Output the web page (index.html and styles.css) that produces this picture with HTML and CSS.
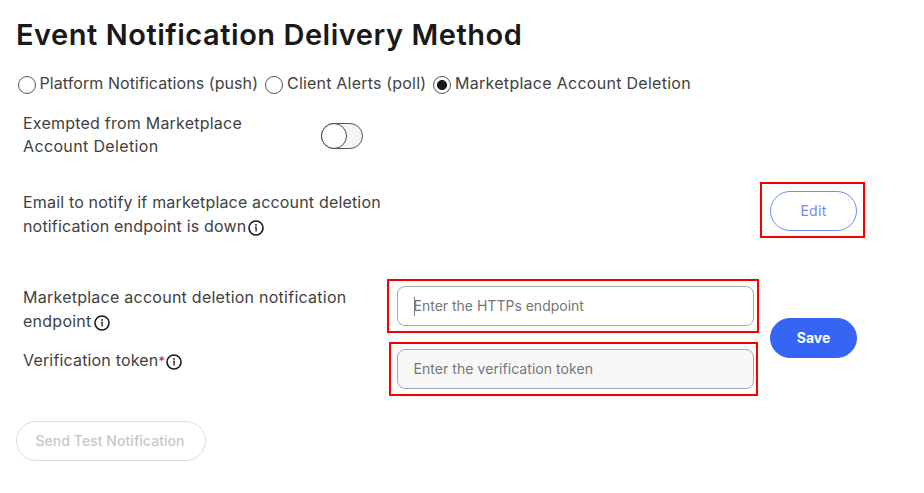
FILE: index.html
```html
<!DOCTYPE html>
<html lang="en">
<head>
<meta charset="utf-8">
<title>Event Notification Delivery Method</title>
<link rel="stylesheet" href="styles.css">
</head>
<body>
<svg class="sprite" width="0" height="0" aria-hidden="true">
  <symbol id="info" viewBox="0 0 16 16">
    <circle cx="8" cy="8" r="7" fill="none" stroke="#191919" stroke-width="1.6"/>
    <circle cx="8" cy="4.9" r="0.95" fill="#191919"/>
    <path d="M7 7.4h1.1v4" fill="none" stroke="#191919" stroke-width="1.3"/>
  </symbol>
</svg>
<main class="page">
  <h1 class="title">Event Notification Delivery Method</h1>
  <div class="methods" role="radiogroup">
    <label class="method method-push"><span class="radio"></span><span class="text">Platform Notifications (push)</span></label>
    <label class="method method-poll"><span class="radio"></span><span class="text">Client Alerts (poll)</span></label>
    <label class="method method-deletion"><span class="radio checked"></span><span class="text">Marketplace Account Deletion</span></label>
  </div>
  <section class="row row-exempt">
    <div class="label label-exempt">Exempted from Marketplace<br><span class="wide">Account Deletion</span></div>
    <span class="toggle"><span class="knob"></span></span>
  </section>
  <section class="row row-email">
    <div class="label">Email to notify if marketplace account deletion<br>notification endpoint is down<svg class="info"><use href="#info"/></svg></div>
    <div class="mark mark-edit"><button class="btn btn-edit">Edit</button></div>
  </section>
  <section class="row row-form">
    <div class="labels">
      <div class="label label-endpoint">Marketplace account deletion notification<br>endpoint<svg class="info"><use href="#info"/></svg></div>
      <div class="label label-token">Verification token<span class="required">*</span><svg class="info"><use href="#info"/></svg></div>
    </div>
    <div class="fields">
      <div class="mark mark-endpoint"><div class="field"><span class="caret"></span><span class="hint hint-endpoint">Enter the HTTPs endpoint</span></div></div>
      <div class="mark mark-token"><div class="field field-filled"><span class="hint hint-token">Enter the verification token</span></div></div>
    </div>
    <button class="btn btn-save">Save</button>
  </section>
  <button class="btn btn-test">Send Test Notification</button>
</main>
</body>
</html>
```
FILE: styles.css
```css
* { box-sizing: border-box; }
body {
  margin: 0;
  background: #fff;
  color: #414141;
  font-family: Inter, "Liberation Sans", sans-serif;
  font-size: 16px;
  line-height: 24px;
}
.sprite { position: absolute; }
.page { width: 924px; height: 493px; overflow: hidden; padding: 15px 0 0 16px; }
.title {
  margin: 0;
  height: 40px;
  font-size: 29px;
  line-height: 40px;
  font-weight: 600;
  letter-spacing: 0.53px;
  color: #191919;
  white-space: nowrap;
}
.methods { display: flex; height: 24px; margin-top: 16px; padding-left: 1.5px; }
.method { display: flex; gap: 4px; white-space: nowrap; letter-spacing: 0.2px; }
.method-push { width: 247.5px; letter-spacing: 0.07px; }
.method-poll { width: 168px; }
.method-deletion { letter-spacing: 0.28px; }
.radio {
  flex: none;
  width: 18px;
  height: 18px;
  margin-top: 5px;
  border: 1px solid #555;
  border-radius: 50%;
}
.checked { background: radial-gradient(circle, #191919 4.6px, transparent 5.4px); }
.row { display: flex; padding-left: 7px; }
.label { white-space: nowrap; letter-spacing: 0.17px; }
.row-exempt { height: 48px; margin-top: 16px; }
.label-exempt { width: 298px; letter-spacing: 0.22px; line-height: 23px; padding-top: 1px; }
.wide { letter-spacing: 0.36px; }
.toggle {
  width: 42px;
  height: 26px;
  margin-top: 12px;
  border: 1px solid #555;
  border-radius: 13px;
  background: #f5f5f5;
}
.knob {
  display: block;
  width: 26px;
  height: 26px;
  margin: -1px;
  border: 1px solid #444;
  border-radius: 50%;
  background: #fff;
}
.row-email { height: 56px; margin-top: 23px; }
.row-email .label { width: 737px; padding-top: 8px; }
.info { width: 16px; height: 16px; margin-left: 2px; vertical-align: -4px; overflow: visible; }
.mark { border: 2px solid #f90000; }
.mark-edit { width: 105px; height: 56px; padding: 7px 8px; }
.btn {
  display: block;
  height: 40px;
  padding: 0;
  border: 1px solid;
  border-radius: 20px;
  background: #fff;
  font: 500 14px/20px Inter, "Liberation Sans", sans-serif;
  white-space: nowrap;
}
.btn-edit { width: 87px; color: #6f89f5; border-color: #6f89f5; font-weight: 400; letter-spacing: 0.3px; }
.btn-save { width: 87px; margin: 39px 0 0 11px; color: #fff; background: #3665f3; border-color: #3665f3; font-weight: 700; }
.btn-test { width: 190px; margin-top: 24px; padding-right: 2px; color: #c7c7c7; border-color: #dcdcdc; letter-spacing: 0.05px; }
.row-form { height: 118px; margin-top: 41px; }
.labels { width: 364px; padding-top: 6px; }
.label-endpoint { letter-spacing: 0.25px; }
.label-token { margin-top: 15px; }
.required { color: #e0103a; font-size: 13px; }
.label-token .info { margin-left: 0.5px; }
.fields { display: flex; flex-direction: column; gap: 9px; width: 372px; }
.mark-endpoint { width: 372px; height: 54px; padding: 5px 3px 5px 7.5px; }
.mark-token { width: 369px; height: 54px; margin-left: 2px; padding: 5px 2px 5px 5.5px; }
.field {
  display: flex;
  align-items: center;
  height: 40px;
  padding-left: 16px;
  border: 1px solid #a8a8a8;
  border-radius: 8px;
  color: #767676;
  font-size: 14px;
  white-space: nowrap;
}
.field-filled { background: #f7f7f7; }
.hint-token { letter-spacing: 0.06px; }
.caret { width: 1px; height: 19px; margin-right: -1px; background: #777; }
```
